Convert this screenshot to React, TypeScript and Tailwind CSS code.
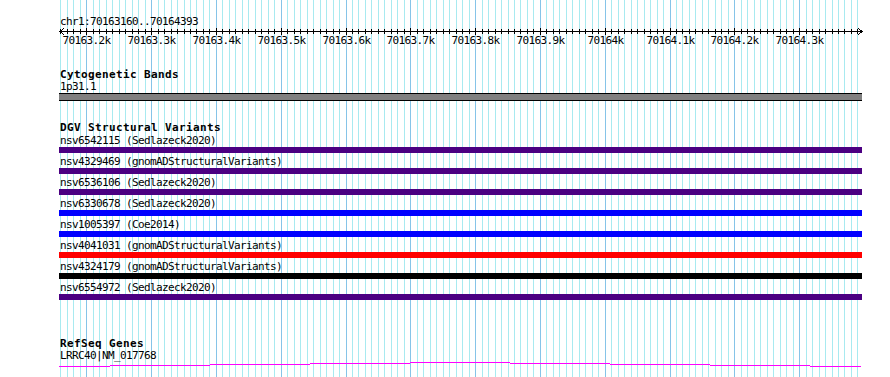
import React from "react";

const xOf = (bp: number) => 86.3 + (bp - 70163200) * 0.648;
const ticks: number[] = [];
for (let bp = 70163160; bp <= 70164390; bp += 10) ticks.push(bp);
const majors = ticks.filter((b) => b % 100 === 0);
const fmt = (bp: number) => {
  const r = bp % 1000;
  return `${Math.floor(bp / 1000)}${r ? "." + r / 100 : ""}k`;
};
const px = (bp: number) => Math.round(xOf(bp));

const variants: { name: string; bar: string }[] = [
  { name: "nsv6542115 (Sedlazeck2020)", bar: "bg-[#4b0082]" },
  { name: "nsv4329469 (gnomADStructuralVariants)", bar: "bg-[#4b0082]" },
  { name: "nsv6536106 (Sedlazeck2020)", bar: "bg-[#4b0082]" },
  { name: "nsv6330678 (Sedlazeck2020)", bar: "bg-[#0000ff]" },
  { name: "nsv1005397 (Coe2014)", bar: "bg-[#0000ff]" },
  { name: "nsv4041031 (gnomADStructuralVariants)", bar: "bg-[#ff0000]" },
  { name: "nsv4324179 (gnomADStructuralVariants)", bar: "bg-[#000000]" },
  { name: "nsv6554972 (Sedlazeck2020)", bar: "bg-[#4b0082]" },
];

const geneSegs: [number, number, number][] = [
  [59, 110, 366],
  [110, 210, 365],
  [210, 310, 364],
  [310, 410, 363],
  [410, 510, 362],
  [510, 610, 363],
  [610, 710, 364],
  [710, 810, 365],
  [810, 861, 366],
];

const txt = "text-[11px] leading-[11px] tracking-[-0.62px] whitespace-pre text-black";
const bold = "text-[11px] leading-[11px] tracking-[0.38px] font-bold whitespace-pre text-black";

export default function App() {
  return (
    <div className="relative w-[890px] h-[377px] overflow-hidden bg-white font-['DejaVu_Sans_Mono',monospace]">
      <svg className="absolute left-0 top-0" width={890} height={377} shapeRendering="crispEdges">
        {ticks.map((b) => (
          <rect
            key={b}
            x={px(b)}
            y={0}
            width={1}
            height={377}
            fill={b % 100 === 0 ? "#86c4e8" : "#a8eaf0"}
          />
        ))}
      </svg>
      <div className="relative flex flex-col pl-[60px] pt-[16px]">
        <div className={txt}>chr1:70163160..70164393</div>
        <svg className="ml-[-60px] block" width={890} height={8} shapeRendering="crispEdges">
          <rect x={60} y={4} width={802} height={1} fill="#000" />
          <polyline points="64,1 60,4.5 64,8" fill="none" stroke="#000" strokeWidth={1} />
          <polyline points="858,1 862,4.5 858,8" fill="none" stroke="#000" strokeWidth={1} />
          {ticks.map((b) =>
            b % 100 === 0 ? (
              <rect key={b} x={px(b)} y={1} width={1} height={7} fill="#000" />
            ) : (
              <rect key={b} x={px(b)} y={2} width={1} height={5} fill="#000" />
            )
          )}
        </svg>
        <div className="relative ml-[-60px] h-[11px]">
          {majors.map((b) => (
            <span
              key={b}
              className={`absolute top-0 -translate-x-1/2 ${txt}`}
              style={{ left: px(b) + 0.5 }}
            >
              {fmt(b)}
            </span>
          ))}
        </div>

        <div className={`mt-[23px] ${bold}`}>Cytogenetic Bands</div>
        <div className={`mt-[1px] ${txt}`}>1p31.1</div>
        <div className="mt-[1px] ml-[-1px] w-[803px] h-[8px] border-y border-black bg-[#808080]" />

        <div className={`mt-[21px] ${bold}`}>DGV Structural Variants</div>
        <div className="mt-[2px] flex flex-col">
          {variants.map((v, i) => (
            <div key={i} className="flex flex-col pb-[3px]">
              <div className={txt}>{v.name}</div>
              <div className={`mt-[1px] ml-[-1px] w-[803px] h-[6px] ${v.bar}`} />
            </div>
          ))}
        </div>

        <div className={`mt-[35px] ${bold}`}>RefSeq Genes</div>
        <div className={`mt-[1px] ${txt}`}>LRRC40|NM_017768</div>
        <svg className="ml-[-60px] block" width={890} height={8} shapeRendering="crispEdges">
          {geneSegs.map(([a, b, y], i) => (
            <rect key={i} x={a} y={y - 361} width={b - a} height={1} fill="#ff00ff" />
          ))}
        </svg>
      </div>
    </div>
  );
}
